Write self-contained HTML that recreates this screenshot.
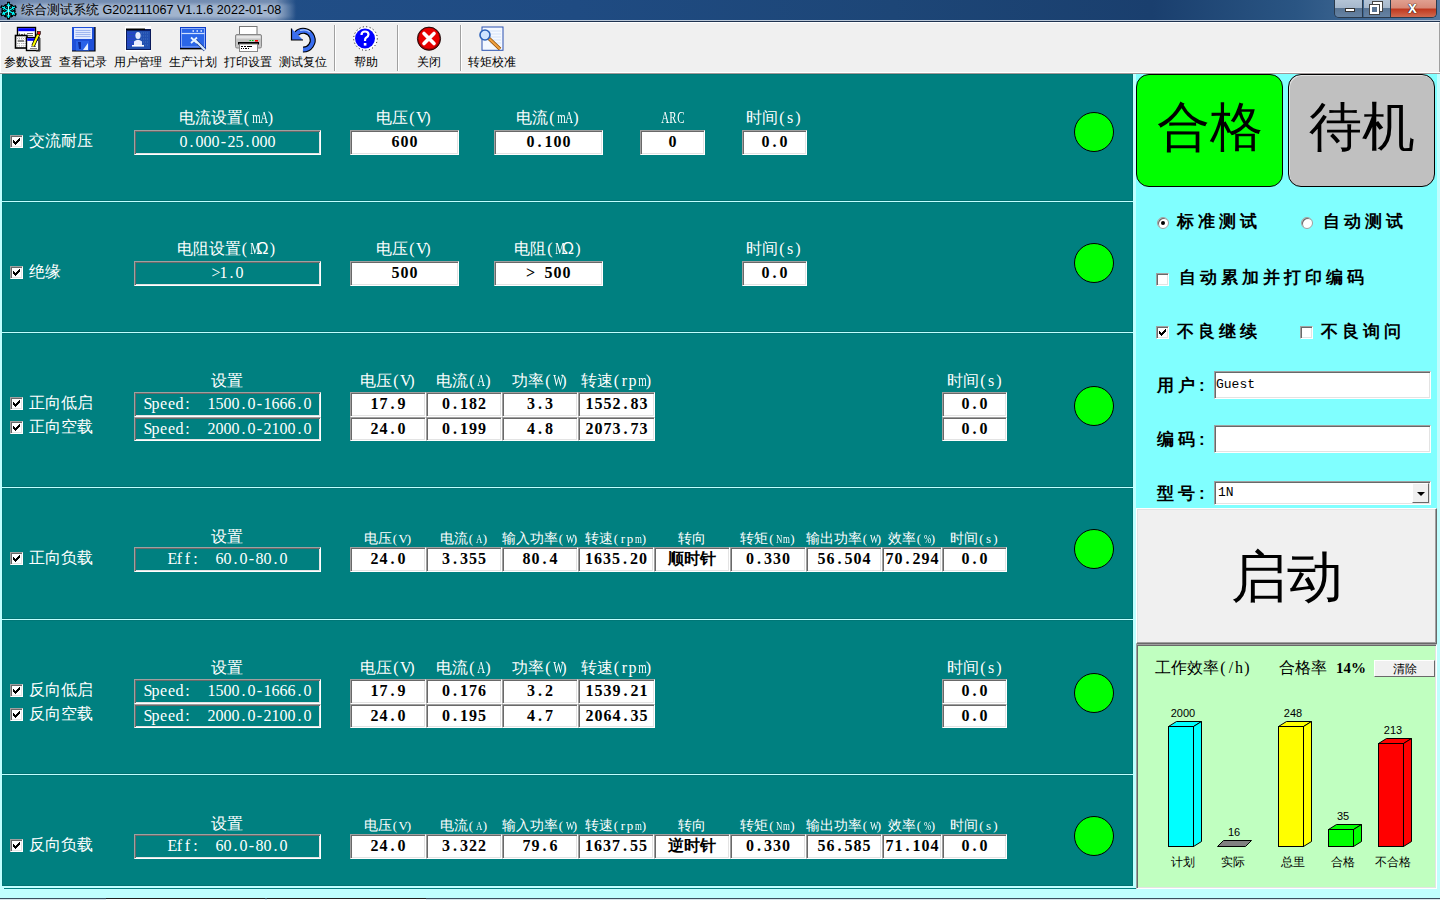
<!DOCTYPE html><html><head><meta charset="utf-8"><title>综合测试系统</title><style>
*{margin:0;padding:0;box-sizing:border-box}
html,body{width:1440px;height:900px;overflow:hidden;background:#c0ffff;font-family:"Liberation Sans",sans-serif}
.a{position:absolute}
.lbl{position:absolute;color:#fff;font-size:16px;line-height:16px;white-space:nowrap;text-align:center}
.lbl14{position:absolute;color:#fff;font-size:14px;line-height:14px;white-space:nowrap;text-align:center}
.sk{position:absolute;border:1px solid;border-color:#a0a0a0 #fff #fff #a0a0a0;box-shadow:inset 1px 1px #696969,inset -1px -1px #e3e3e3}
.set{color:#fff;font-family:"Liberation Serif",serif;font-size:16px;line-height:16px;text-align:center;white-space:pre;display:flex;align-items:flex-start;justify-content:center;padding-top:3px}
.set i{width:8px}
.val{background:#fff;color:#000;font-family:"Liberation Serif",serif;font-weight:bold;font-size:16px;line-height:16px;white-space:pre;display:flex;align-items:flex-start;justify-content:center;padding-top:3px}
.val i{width:9px}
i{display:inline-block;font-style:normal;text-align:center}
.panel{position:absolute;left:2px;width:1131px;background:#008080;box-shadow:inset 1px 1px #007777,inset -1px -1px #007272}
.chk{position:absolute;width:13px;height:13px;background:#fff;border:1px solid;border-color:#a0a0a0 #fff #fff #a0a0a0;box-shadow:inset 1px 1px #696969,inset -1px -1px #e3e3e3}
.dot{position:absolute;width:40px;height:40px;border-radius:50%;background:#00ff00;border:1px solid #000}
.tb{position:absolute;top:55px;font-size:12px;line-height:14px;color:#000;text-align:center;white-space:nowrap}
.m{font-family:"Liberation Serif",serif;font-size:16px}
.m i{width:8px}
i.w{transform:scaleX(.68)}
.m14{font-family:"Liberation Serif",serif;font-size:13px}
.m14 i{width:7px}
.rp{position:absolute;font-weight:bold;font-size:17px;line-height:18px;letter-spacing:4px;color:#000;white-space:nowrap}
</style></head><body>
<div class="a" style="left:0;top:0;width:1440px;height:20px;background:linear-gradient(90deg,#22508a 0,#1f4b82 40%,#1d4677 62%,#1a3f6e 80%,#2a5583 90%,#557aa3 100%)"></div>
<div class="a" style="left:0;top:0;width:296px;height:20px;background:linear-gradient(90deg,rgba(100,125,165,.8) 0,rgba(125,148,182,.9) 8%,rgba(125,148,182,.9) 93%,rgba(125,148,182,0) 100%)"></div>
<div class="a" style="left:0;top:4px;width:296px;height:14px;background:linear-gradient(90deg,rgba(180,196,218,0) 0,rgba(180,196,218,.7) 12%,rgba(180,196,218,.7) 92%,rgba(180,196,218,0) 100%);filter:blur(1.5px)"></div>
<div class="a" style="left:0;top:20px;width:1440px;height:1px;background:#b9c7d8"></div>
<div class="a" style="left:0;top:21px;width:1440px;height:1px;background:#1f3350"></div>
<div class="a" style="left:21px;top:2px;font-size:12.6px;line-height:16px;color:#000;white-space:nowrap">综合测试系统 G202111067 V1.1.6 2022-01-08</div>
<svg class="a" style="left:0px;top:0px" width="18" height="20" viewBox="0 0 18 20"><path d="M8.5 10.7L8.50 3.30M6.70 5.50L10.30 5.50M8.5 10.7L2.09 7.00M3.10 9.66L4.90 6.54M8.5 10.7L2.09 14.40M4.90 14.86L3.10 11.74M8.5 10.7L8.50 18.10M10.30 15.90L6.70 15.90M8.5 10.7L14.91 14.40M13.90 11.74L12.10 14.86M8.5 10.7L14.91 7.00M12.10 6.54L13.90 9.66" stroke="#000" stroke-width="3" stroke-linecap="square" fill="none"/><path d="M8.5 10.7L8.50 3.30M6.70 5.50L10.30 5.50M8.5 10.7L2.09 7.00M3.10 9.66L4.90 6.54M8.5 10.7L2.09 14.40M4.90 14.86L3.10 11.74M8.5 10.7L8.50 18.10M10.30 15.90L6.70 15.90M8.5 10.7L14.91 14.40M13.90 11.74L12.10 14.86M8.5 10.7L14.91 7.00M12.10 6.54L13.90 9.66" stroke="#00ffff" stroke-width="1.3" fill="none"/><path d="M8.5 6v9.4" stroke="#e8ffff" stroke-width="0.7"/></svg>
<div class="a" style="left:1334px;top:0;width:103px;height:18px;border:1px solid #2a3a4c;border-top:none;border-radius:0 0 5px 5px;overflow:hidden"><div class="a" style="left:0;top:0;width:28px;height:17px;background:linear-gradient(#b4c4d6 0,#a6b8cc 45%,#5a7594 50%,#6683a3 100%);border-right:1px solid #2a3a4c"></div><div class="a" style="left:29px;top:0;width:26px;height:17px;background:linear-gradient(#b4c4d6 0,#a6b8cc 45%,#5a7594 50%,#6683a3 100%)"></div><div class="a" style="left:55px;top:0;width:48px;height:17px;background:linear-gradient(#e0a090 0,#d88a78 45%,#c03a20 55%,#d06a50 100%);border-left:1px solid #2a3a4c"></div><div class="a" style="left:10px;top:8px;width:10px;height:4px;background:#fff;border:1px solid #333"></div><div class="a" style="left:38px;top:2px;width:9px;height:9px;border:2px solid #fff;outline:1px solid #444"></div><div class="a" style="left:35px;top:5px;width:9px;height:9px;border:2px solid #fff;background:#5a7594;outline:1px solid #444"></div><div class="a" style="left:73px;top:-1px;font:bold 16px/18px 'Liberation Sans',sans-serif;color:#fff;text-shadow:0 0 1px #000,0 0 1px #000">x</div></div>
<div class="a" style="left:0;top:22px;width:1440px;height:52px;background:#f0f0f0;border-top:1px solid #fff;border-left:1px solid #fff;border-right:1px solid #a0a0a0"></div>
<div class="a" style="left:0;top:72px;width:1440px;height:1px;background:#fff"></div>
<div class="a" style="left:0;top:73px;width:1440px;height:1px;background:#a09898"></div>
<div class="tb" style="left:-2px;width:60px">参数设置</div>
<div class="tb" style="left:53px;width:60px">查看记录</div>
<div class="tb" style="left:108px;width:60px">用户管理</div>
<div class="tb" style="left:163px;width:60px">生产计划</div>
<div class="tb" style="left:218px;width:60px">打印设置</div>
<div class="tb" style="left:273px;width:60px">测试复位</div>
<div class="tb" style="left:336px;width:60px">帮助</div>
<div class="tb" style="left:399px;width:60px">关闭</div>
<div class="tb" style="left:462px;width:60px">转矩校准</div>
<div class="a" style="left:334px;top:25px;width:1px;height:46px;background:#a0a0a0;box-shadow:1px 0 #fff"></div>
<div class="a" style="left:397px;top:25px;width:1px;height:46px;background:#a0a0a0;box-shadow:1px 0 #fff"></div>
<div class="a" style="left:460px;top:25px;width:1px;height:46px;background:#a0a0a0;box-shadow:1px 0 #fff"></div>

<svg class="a" style="left:0;top:0" width="520" height="56" viewBox="0 0 520 56">
 <!-- icon1: params -->
 <g>
  <rect x="17.5" y="27.5" width="18" height="16" fill="#fff" stroke="#000" stroke-width="1.4"/>
  <rect x="18.2" y="28.2" width="16.6" height="3" fill="#0000ff"/>
  <path d="M19.5 33.5v2M21 34.5h2M24.5 33.5v2M27 33.5h6M28 35.5h5" stroke="#666" stroke-width="1"/>
  <rect x="15.5" y="35.5" width="11.5" height="12.5" fill="#fff" stroke="#000" stroke-width="1.6"/>
  <path d="M17 38.5h9M17 41h9M17 43.5h9M17 46h9" stroke="#b0b0b0" stroke-width="1" stroke-dasharray="1 1"/>
  <path d="M19 37v10M22 37v10M25 37v10" stroke="#c0c0c0" stroke-width="1" stroke-dasharray="1 1"/>
  <rect x="18" y="40" width="6" height="2" fill="#888"/>
  <rect x="26.5" y="37.5" width="12.5" height="13" fill="#fff" stroke="#000" stroke-width="1.4"/>
  <rect x="27.2" y="38.2" width="11" height="2.6" fill="#0000ff"/>
  <path d="M30 48.5h7M31 46.5h5" stroke="#777" stroke-width="0.9"/>
  <path d="M33 46 L38.5 34" stroke="#000" stroke-width="3.6"/>
  <path d="M33 46 L38.5 34" stroke="#ffff00" stroke-width="2"/>
  <rect x="37.3" y="31.5" width="3" height="3" fill="#ff0000" stroke="#000" stroke-width="0.6"/>
  <path d="M36 51h4M40 38v13" stroke="#444" stroke-width="1"/>
 </g>
 <!-- icon2: floppy -->
 <g>
  <rect x="72" y="27" width="23" height="24" fill="#1e4fd8"/>
  <path d="M72 51h23V27" fill="none" stroke="#000" stroke-width="1.2"/>
  <rect x="74" y="28" width="18" height="11" fill="#dfe8ff"/>
  <path d="M75.5 30.5h15M75.5 32.5h15M75.5 34.5h15M75.5 36.5h15" stroke="#9fb6f0" stroke-width="1"/>
  <rect x="76" y="41" width="13" height="9.5" fill="#2a62e8"/>
  <path d="M78 42h3v7h-2z" fill="#0a2a9a"/>
  <path d="M83 50 L88 43 V50Z" fill="#e8f0ff"/>
 </g>
 <!-- icon3: users -->
 <g>
  <rect x="125" y="26" width="26" height="25.5" fill="#fff"/>
  <rect x="126" y="29" width="25" height="21" fill="#0a1a5a"/>
  <rect x="126" y="28.5" width="19" height="1.5" fill="#000"/>
  <rect x="127" y="31" width="23" height="18" fill="#2250b0"/>
  <path d="M127.5 33h8M127.5 36h8M127.5 39h8M127.5 42h8M127.5 45h8" stroke="#3030ff" stroke-width="1.2" stroke-dasharray="1.2 0.8"/>
  <path d="M141 33h8M141 36h8M141 39h8M141 42h8M141 45h8" stroke="#4070c0" stroke-width="1.2" stroke-dasharray="1 1"/>
  <ellipse cx="138" cy="35.5" rx="2.6" ry="3.6" fill="#e8ecff"/>
  <path d="M134 41.5 Q138 38 142 41.5 V45 H134Z" fill="#e8ecff"/>
  <rect x="132" y="45" width="12" height="1.6" fill="#fff"/>
 </g>
 <!-- icon4: plan -->
 <g>
  <rect x="180" y="27" width="26" height="21.5" fill="#0c3cc8"/>
  <rect x="181.5" y="28.5" width="23" height="18.5" fill="#2a66e8" stroke="#a8c4ff" stroke-width="0.8"/>
  <path d="M181.5 33.5h23" stroke="#d0e0ff" stroke-width="1.2"/>
  <path d="M192.5 31h1.5M196.5 31h1.5M200.5 31h1.5" stroke="#e8f0ff" stroke-width="1.6"/>
  <rect x="180" y="48" width="22" height="1.4" fill="#000"/>
  <path d="M195 40 L205 50" stroke="#1a3a8a" stroke-width="3.6"/>
  <path d="M195 40 L205 50" stroke="#d8ecff" stroke-width="2.2"/>
  <path d="M191 37.5 L197 43 M197 37.5 L191 43" stroke="#e8f4ff" stroke-width="1.8"/>
 </g>
 <!-- icon5: printer -->
 <g>
  <rect x="239.5" y="26.5" width="17.5" height="10" fill="#fff" stroke="#777" stroke-width="1"/>
  <path d="M238 36.5h21" stroke="#000" stroke-width="1.2"/>
  <rect x="235.5" y="34.5" width="26" height="13.5" rx="1.5" fill="#c4c4c4" stroke="#888" stroke-width="1"/>
  <rect x="236.5" y="36" width="24" height="2.5" fill="#e6e6e6"/>
  <path d="M249.5 40.5h1.5M252 40.5h1.5" stroke="#00d000" stroke-width="1.2"/>
  <path d="M255 40.8h3" stroke="#ff0000" stroke-width="1.6"/>
  <rect x="238" y="42" width="21" height="2.5" fill="#000"/>
  <rect x="239.5" y="44" width="18" height="7.5" fill="#fff" stroke="#888" stroke-width="1"/>
  <path d="M241 46.5h2M244 46.5h2M247 46.5h5M241 48.5h1M243 48.5h1M245 48.5h2M248 48.5h1" stroke="#000" stroke-width="1"/>
 </g>
 <!-- icon6: undo -->
 <g>
  <path d="M296.6 33.6 A9.4 9.4 0 1 1 303 49.6" fill="none" stroke="#000" stroke-width="6"/>
  <path d="M296.6 33.6 A9.4 9.4 0 1 1 303 49.6" fill="none" stroke="#3a6ef0" stroke-width="3.8"/>
  <path d="M300 30.5 Q306 28.5 310 32" fill="none" stroke="#a8c4ff" stroke-width="1.2"/>
  <path d="M291.5 28.5 V40 H303 Z" fill="#3a6ef0"/><path d="M303 40 H291.5 V28.5" fill="none" stroke="#000" stroke-width="1.2"/>
 </g>
 <!-- icon7: help -->
 <g>
  <circle cx="365.5" cy="38.5" r="11.5" fill="#fff"/>
  <circle cx="365.5" cy="38.5" r="11.8" fill="none" stroke="#000" stroke-width="1" stroke-dasharray="1 2.5"/>
  <circle cx="365" cy="38.5" r="10" fill="#0000ff"/>
  <path d="M361.5 35 Q361.5 31.5 365 31.5 Q368.5 31.5 368.5 34.5 Q368.5 36.5 365.8 38 Q365 38.6 365 41" fill="none" stroke="#fff" stroke-width="2.2"/>
  <rect x="363.8" y="43" width="2.6" height="2.6" fill="#fff"/>
 </g>
 <!-- icon8: close -->
 <g>
  <circle cx="429" cy="38.7" r="11.6" fill="#a00000" stroke="#000" stroke-width="0.8"/>
  <circle cx="429" cy="38.2" r="10.2" fill="#e80000"/>
  <path d="M424 33.5 L434 43.5 M434 33.5 L424 43.5" stroke="#fff" stroke-width="3.6" stroke-linecap="round"/>
 </g>
 <!-- icon9: zoom -->
 <g>
  <rect x="482" y="27" width="21" height="23.3" fill="#f4f8ff" stroke="#2a50b0" stroke-width="1"/>
  <path d="M485 31h16M485 34h16M490 37h11M490 40h11M490 43h11" stroke="#d4e2f8" stroke-width="1.2"/>
  <path d="M489 38.5 L500 49" stroke="#8a4a00" stroke-width="3.6"/>
  <path d="M489 38.5 L500 49" stroke="#f0a040" stroke-width="2.2"/>
  <circle cx="485" cy="35" r="5" fill="#cfe4ff" stroke="#2a60b8" stroke-width="1.6"/>
 </g>
</svg>

<div class="panel" style="top:74px;height:127px"></div>
<div class="panel" style="top:202px;height:130px"></div>
<div class="panel" style="top:333px;height:154px"></div>
<div class="panel" style="top:488px;height:131px"></div>
<div class="panel" style="top:620px;height:154px"></div>
<div class="panel" style="top:775px;height:111px"></div>
<div class="a" style="left:4px;top:888px;width:1132px;height:1px;background:#008080"></div>
<div class="a" style="left:0;top:898px;width:1440px;height:1px;background:#3a5060"></div>
<div class="a" style="left:0;top:899px;width:1440px;height:1px;background:#d8e4ea"></div>
<div class="a" style="left:106px;top:898px;width:159px;height:2px;background:#fff;border-top:1px solid #202020"></div>
<div class="a" style="left:267px;top:898px;width:159px;height:2px;background:#fff;border-top:1px solid #202020"></div>
<div class="chk" style="left:10px;top:135px"><svg class="a" style="left:2px;top:2px" width="7" height="7" viewBox="0 0 7 7" shape-rendering="crispEdges"><path d="M6 0h1v3h-1zM5 1h1v3h-1zM4 2h1v3h-1zM3 3h1v3h-1zM2 4h1v3h-1zM1 3h1v3h-1zM0 2h1v3h-1z" fill="#000"/></svg></div>
<div class="lbl" style="left:29.0px;top:133px;width:64px">交流耐压</div>
<div class="lbl" style="left:126.5px;top:110px;width:200px">电流设置<span class="m"><i>(</i><i class="w">m</i><i class="w">A</i><i>)</i></span></div>
<div class="sk set" style="left:134px;top:130px;width:187px;height:25px"><i>0</i><i>.</i><i>0</i><i>0</i><i>0</i><i>-</i><i>2</i><i>5</i><i>.</i><i>0</i><i>0</i><i>0</i></div>
<div class="lbl" style="left:304.0px;top:110px;width:200px">电压<span class="m"><i>(</i><i>V</i><i>)</i></span></div>
<div class="sk val" style="left:350px;top:130px;width:109px;height:25px"><i>6</i><i>0</i><i>0</i></div>
<div class="lbl" style="left:448.0px;top:110px;width:200px">电流<span class="m"><i>(</i><i class="w">m</i><i class="w">A</i><i>)</i></span></div>
<div class="sk val" style="left:494px;top:130px;width:109px;height:25px"><i>0</i><i>.</i><i>1</i><i>0</i><i>0</i></div>
<div class="lbl" style="left:572.0px;top:110px;width:200px"><span class="m"><i class="w">A</i><i class="w">R</i><i class="w">C</i></span></div>
<div class="sk val" style="left:640px;top:130px;width:65px;height:25px"><i>0</i></div>
<div class="lbl" style="left:674.0px;top:110px;width:200px">时间<span class="m"><i>(</i><i>s</i><i>)</i></span></div>
<div class="sk val" style="left:742px;top:130px;width:65px;height:25px"><i>0</i><i>.</i><i>0</i></div>
<div class="dot" style="left:1074px;top:112px"></div>
<div class="chk" style="left:10px;top:266px"><svg class="a" style="left:2px;top:2px" width="7" height="7" viewBox="0 0 7 7" shape-rendering="crispEdges"><path d="M6 0h1v3h-1zM5 1h1v3h-1zM4 2h1v3h-1zM3 3h1v3h-1zM2 4h1v3h-1zM1 3h1v3h-1zM0 2h1v3h-1z" fill="#000"/></svg></div>
<div class="lbl" style="left:29.0px;top:264px;width:32px">绝缘</div>
<div class="lbl" style="left:126.5px;top:241px;width:200px">电阻设置<span class="m"><i>(</i><i class="w">M</i></span>Ω<span class="m"><i>)</i></span></div>
<div class="sk set" style="left:134px;top:261px;width:187px;height:25px"><i>&gt;</i><i>1</i><i>.</i><i>0</i></div>
<div class="lbl" style="left:304.0px;top:241px;width:200px">电压<span class="m"><i>(</i><i>V</i><i>)</i></span></div>
<div class="sk val" style="left:350px;top:261px;width:109px;height:25px"><i>5</i><i>0</i><i>0</i></div>
<div class="lbl" style="left:448.0px;top:241px;width:200px">电阻<span class="m"><i>(</i><i class="w">M</i></span>Ω<span class="m"><i>)</i></span></div>
<div class="sk val" style="left:494px;top:261px;width:109px;height:25px"><i>&gt;</i><i>&nbsp;</i><i>5</i><i>0</i><i>0</i></div>
<div class="lbl" style="left:674.0px;top:241px;width:200px">时间<span class="m"><i>(</i><i>s</i><i>)</i></span></div>
<div class="sk val" style="left:742px;top:261px;width:65px;height:25px"><i>0</i><i>.</i><i>0</i></div>
<div class="dot" style="left:1074px;top:243px"></div>
<div class="chk" style="left:10px;top:397px"><svg class="a" style="left:2px;top:2px" width="7" height="7" viewBox="0 0 7 7" shape-rendering="crispEdges"><path d="M6 0h1v3h-1zM5 1h1v3h-1zM4 2h1v3h-1zM3 3h1v3h-1zM2 4h1v3h-1zM1 3h1v3h-1zM0 2h1v3h-1z" fill="#000"/></svg></div>
<div class="lbl" style="left:29.0px;top:395px;width:64px">正向低启</div>
<div class="chk" style="left:10px;top:421px"><svg class="a" style="left:2px;top:2px" width="7" height="7" viewBox="0 0 7 7" shape-rendering="crispEdges"><path d="M6 0h1v3h-1zM5 1h1v3h-1zM4 2h1v3h-1zM3 3h1v3h-1zM2 4h1v3h-1zM1 3h1v3h-1zM0 2h1v3h-1z" fill="#000"/></svg></div>
<div class="lbl" style="left:29.0px;top:419px;width:64px">正向空载</div>
<div class="lbl" style="left:126.5px;top:373px;width:200px">设置</div>
<div class="sk set" style="left:134px;top:392px;width:187px;height:25px"><i>S</i><i>p</i><i>e</i><i>e</i><i>d</i><i>:</i><i>&nbsp;</i><i>&nbsp;</i><i>1</i><i>5</i><i>0</i><i>0</i><i>.</i><i>0</i><i>-</i><i>1</i><i>6</i><i>6</i><i>6</i><i>.</i><i>0</i></div>
<div class="sk set" style="left:134px;top:417px;width:187px;height:24px"><i>S</i><i>p</i><i>e</i><i>e</i><i>d</i><i>:</i><i>&nbsp;</i><i>&nbsp;</i><i>2</i><i>0</i><i>0</i><i>0</i><i>.</i><i>0</i><i>-</i><i>2</i><i>1</i><i>0</i><i>0</i><i>.</i><i>0</i></div>
<div class="lbl" style="left:343.0px;top:373px;width:90px">电压<span class="m"><i>(</i><i>V</i><i>)</i></span></div>
<div class="lbl" style="left:419.0px;top:373px;width:90px">电流<span class="m"><i>(</i><i class="w">A</i><i>)</i></span></div>
<div class="lbl" style="left:495.0px;top:373px;width:90px">功率<span class="m"><i>(</i><i class="w">W</i><i>)</i></span></div>
<div class="lbl" style="left:571.5px;top:373px;width:90px">转速<span class="m"><i>(</i><i>r</i><i>p</i><i class="w">m</i><i>)</i></span></div>
<div class="sk val" style="left:350px;top:392px;width:76px;height:25px"><i>1</i><i>7</i><i>.</i><i>9</i></div>
<div class="sk val" style="left:426px;top:392px;width:76px;height:25px"><i>0</i><i>.</i><i>1</i><i>8</i><i>2</i></div>
<div class="sk val" style="left:502px;top:392px;width:76px;height:25px"><i>3</i><i>.</i><i>3</i></div>
<div class="sk val" style="left:578px;top:392px;width:77px;height:25px"><i>1</i><i>5</i><i>5</i><i>2</i><i>.</i><i>8</i><i>3</i></div>
<div class="sk val" style="left:350px;top:417px;width:76px;height:24px"><i>2</i><i>4</i><i>.</i><i>0</i></div>
<div class="sk val" style="left:426px;top:417px;width:76px;height:24px"><i>0</i><i>.</i><i>1</i><i>9</i><i>9</i></div>
<div class="sk val" style="left:502px;top:417px;width:76px;height:24px"><i>4</i><i>.</i><i>8</i></div>
<div class="sk val" style="left:578px;top:417px;width:77px;height:24px"><i>2</i><i>0</i><i>7</i><i>3</i><i>.</i><i>7</i><i>3</i></div>
<div class="lbl" style="left:875.0px;top:373px;width:200px">时间<span class="m"><i>(</i><i>s</i><i>)</i></span></div>
<div class="sk val" style="left:942px;top:392px;width:65px;height:25px"><i>0</i><i>.</i><i>0</i></div>
<div class="sk val" style="left:942px;top:417px;width:65px;height:24px"><i>0</i><i>.</i><i>0</i></div>
<div class="dot" style="left:1074px;top:386px"></div>
<div class="chk" style="left:10px;top:552px"><svg class="a" style="left:2px;top:2px" width="7" height="7" viewBox="0 0 7 7" shape-rendering="crispEdges"><path d="M6 0h1v3h-1zM5 1h1v3h-1zM4 2h1v3h-1zM3 3h1v3h-1zM2 4h1v3h-1zM1 3h1v3h-1zM0 2h1v3h-1z" fill="#000"/></svg></div>
<div class="lbl" style="left:29.0px;top:550px;width:64px">正向负载</div>
<div class="lbl" style="left:126.5px;top:529px;width:200px">设置</div>
<div class="sk set" style="left:134px;top:547px;width:187px;height:25px"><i>E</i><i>f</i><i>f</i><i>:</i><i>&nbsp;</i><i>&nbsp;</i><i>6</i><i>0</i><i>.</i><i>0</i><i>-</i><i>8</i><i>0</i><i>.</i><i>0</i></div>
<div class="lbl14" style="left:343.0px;top:531px;width:90px">电压<span class="m14"><i>(</i><i>V</i><i>)</i></span></div>
<div class="lbl14" style="left:419.0px;top:531px;width:90px">电流<span class="m14"><i>(</i><i class="w">A</i><i>)</i></span></div>
<div class="lbl14" style="left:495.0px;top:531px;width:90px">输入功率<span class="m14"><i>(</i><i class="w">W</i><i>)</i></span></div>
<div class="lbl14" style="left:571.0px;top:531px;width:90px">转速<span class="m14"><i>(</i><i>r</i><i>p</i><i class="w">m</i><i>)</i></span></div>
<div class="lbl14" style="left:647.0px;top:531px;width:90px">转向</div>
<div class="lbl14" style="left:723.0px;top:531px;width:90px">转矩<span class="m14"><i>(</i><i class="w">N</i><i class="w">m</i><i>)</i></span></div>
<div class="lbl14" style="left:799.0px;top:531px;width:90px">输出功率<span class="m14"><i>(</i><i class="w">W</i><i>)</i></span></div>
<div class="lbl14" style="left:867.0px;top:531px;width:90px">效率<span class="m14"><i>(</i><i class="w">%</i><i>)</i></span></div>
<div class="lbl14" style="left:929.5px;top:531px;width:90px">时间<span class="m14"><i>(</i><i>s</i><i>)</i></span></div>
<div class="sk val" style="left:350px;top:547px;width:76px;height:25px"><i>2</i><i>4</i><i>.</i><i>0</i></div>
<div class="sk val" style="left:426px;top:547px;width:76px;height:25px"><i>3</i><i>.</i><i>3</i><i>5</i><i>5</i></div>
<div class="sk val" style="left:502px;top:547px;width:76px;height:25px"><i>8</i><i>0</i><i>.</i><i>4</i></div>
<div class="sk val" style="left:578px;top:547px;width:76px;height:25px"><i>1</i><i>6</i><i>3</i><i>5</i><i>.</i><i>2</i><i>0</i></div>
<div class="sk val" style="left:654px;top:547px;width:76px;height:25px">顺时针</div>
<div class="sk val" style="left:730px;top:547px;width:76px;height:25px"><i>0</i><i>.</i><i>3</i><i>3</i><i>0</i></div>
<div class="sk val" style="left:806px;top:547px;width:76px;height:25px"><i>5</i><i>6</i><i>.</i><i>5</i><i>0</i><i>4</i></div>
<div class="sk val" style="left:882px;top:547px;width:60px;height:25px"><i>7</i><i>0</i><i>.</i><i>2</i><i>9</i><i>4</i></div>
<div class="sk val" style="left:942px;top:547px;width:65px;height:25px"><i>0</i><i>.</i><i>0</i></div>
<div class="dot" style="left:1074px;top:529px"></div>
<div class="chk" style="left:10px;top:684px"><svg class="a" style="left:2px;top:2px" width="7" height="7" viewBox="0 0 7 7" shape-rendering="crispEdges"><path d="M6 0h1v3h-1zM5 1h1v3h-1zM4 2h1v3h-1zM3 3h1v3h-1zM2 4h1v3h-1zM1 3h1v3h-1zM0 2h1v3h-1z" fill="#000"/></svg></div>
<div class="lbl" style="left:29.0px;top:682px;width:64px">反向低启</div>
<div class="chk" style="left:10px;top:708px"><svg class="a" style="left:2px;top:2px" width="7" height="7" viewBox="0 0 7 7" shape-rendering="crispEdges"><path d="M6 0h1v3h-1zM5 1h1v3h-1zM4 2h1v3h-1zM3 3h1v3h-1zM2 4h1v3h-1zM1 3h1v3h-1zM0 2h1v3h-1z" fill="#000"/></svg></div>
<div class="lbl" style="left:29.0px;top:706px;width:64px">反向空载</div>
<div class="lbl" style="left:126.5px;top:660px;width:200px">设置</div>
<div class="sk set" style="left:134px;top:679px;width:187px;height:25px"><i>S</i><i>p</i><i>e</i><i>e</i><i>d</i><i>:</i><i>&nbsp;</i><i>&nbsp;</i><i>1</i><i>5</i><i>0</i><i>0</i><i>.</i><i>0</i><i>-</i><i>1</i><i>6</i><i>6</i><i>6</i><i>.</i><i>0</i></div>
<div class="sk set" style="left:134px;top:704px;width:187px;height:24px"><i>S</i><i>p</i><i>e</i><i>e</i><i>d</i><i>:</i><i>&nbsp;</i><i>&nbsp;</i><i>2</i><i>0</i><i>0</i><i>0</i><i>.</i><i>0</i><i>-</i><i>2</i><i>1</i><i>0</i><i>0</i><i>.</i><i>0</i></div>
<div class="lbl" style="left:343.0px;top:660px;width:90px">电压<span class="m"><i>(</i><i>V</i><i>)</i></span></div>
<div class="lbl" style="left:419.0px;top:660px;width:90px">电流<span class="m"><i>(</i><i class="w">A</i><i>)</i></span></div>
<div class="lbl" style="left:495.0px;top:660px;width:90px">功率<span class="m"><i>(</i><i class="w">W</i><i>)</i></span></div>
<div class="lbl" style="left:571.5px;top:660px;width:90px">转速<span class="m"><i>(</i><i>r</i><i>p</i><i class="w">m</i><i>)</i></span></div>
<div class="sk val" style="left:350px;top:679px;width:76px;height:25px"><i>1</i><i>7</i><i>.</i><i>9</i></div>
<div class="sk val" style="left:426px;top:679px;width:76px;height:25px"><i>0</i><i>.</i><i>1</i><i>7</i><i>6</i></div>
<div class="sk val" style="left:502px;top:679px;width:76px;height:25px"><i>3</i><i>.</i><i>2</i></div>
<div class="sk val" style="left:578px;top:679px;width:77px;height:25px"><i>1</i><i>5</i><i>3</i><i>9</i><i>.</i><i>2</i><i>1</i></div>
<div class="sk val" style="left:350px;top:704px;width:76px;height:24px"><i>2</i><i>4</i><i>.</i><i>0</i></div>
<div class="sk val" style="left:426px;top:704px;width:76px;height:24px"><i>0</i><i>.</i><i>1</i><i>9</i><i>5</i></div>
<div class="sk val" style="left:502px;top:704px;width:76px;height:24px"><i>4</i><i>.</i><i>7</i></div>
<div class="sk val" style="left:578px;top:704px;width:77px;height:24px"><i>2</i><i>0</i><i>6</i><i>4</i><i>.</i><i>3</i><i>5</i></div>
<div class="lbl" style="left:875.0px;top:660px;width:200px">时间<span class="m"><i>(</i><i>s</i><i>)</i></span></div>
<div class="sk val" style="left:942px;top:679px;width:65px;height:25px"><i>0</i><i>.</i><i>0</i></div>
<div class="sk val" style="left:942px;top:704px;width:65px;height:24px"><i>0</i><i>.</i><i>0</i></div>
<div class="dot" style="left:1074px;top:673px"></div>
<div class="chk" style="left:10px;top:839px"><svg class="a" style="left:2px;top:2px" width="7" height="7" viewBox="0 0 7 7" shape-rendering="crispEdges"><path d="M6 0h1v3h-1zM5 1h1v3h-1zM4 2h1v3h-1zM3 3h1v3h-1zM2 4h1v3h-1zM1 3h1v3h-1zM0 2h1v3h-1z" fill="#000"/></svg></div>
<div class="lbl" style="left:29.0px;top:837px;width:64px">反向负载</div>
<div class="lbl" style="left:126.5px;top:816px;width:200px">设置</div>
<div class="sk set" style="left:134px;top:834px;width:187px;height:25px"><i>E</i><i>f</i><i>f</i><i>:</i><i>&nbsp;</i><i>&nbsp;</i><i>6</i><i>0</i><i>.</i><i>0</i><i>-</i><i>8</i><i>0</i><i>.</i><i>0</i></div>
<div class="lbl14" style="left:343.0px;top:818px;width:90px">电压<span class="m14"><i>(</i><i>V</i><i>)</i></span></div>
<div class="lbl14" style="left:419.0px;top:818px;width:90px">电流<span class="m14"><i>(</i><i class="w">A</i><i>)</i></span></div>
<div class="lbl14" style="left:495.0px;top:818px;width:90px">输入功率<span class="m14"><i>(</i><i class="w">W</i><i>)</i></span></div>
<div class="lbl14" style="left:571.0px;top:818px;width:90px">转速<span class="m14"><i>(</i><i>r</i><i>p</i><i class="w">m</i><i>)</i></span></div>
<div class="lbl14" style="left:647.0px;top:818px;width:90px">转向</div>
<div class="lbl14" style="left:723.0px;top:818px;width:90px">转矩<span class="m14"><i>(</i><i class="w">N</i><i class="w">m</i><i>)</i></span></div>
<div class="lbl14" style="left:799.0px;top:818px;width:90px">输出功率<span class="m14"><i>(</i><i class="w">W</i><i>)</i></span></div>
<div class="lbl14" style="left:867.0px;top:818px;width:90px">效率<span class="m14"><i>(</i><i class="w">%</i><i>)</i></span></div>
<div class="lbl14" style="left:929.5px;top:818px;width:90px">时间<span class="m14"><i>(</i><i>s</i><i>)</i></span></div>
<div class="sk val" style="left:350px;top:834px;width:76px;height:25px"><i>2</i><i>4</i><i>.</i><i>0</i></div>
<div class="sk val" style="left:426px;top:834px;width:76px;height:25px"><i>3</i><i>.</i><i>3</i><i>2</i><i>2</i></div>
<div class="sk val" style="left:502px;top:834px;width:76px;height:25px"><i>7</i><i>9</i><i>.</i><i>6</i></div>
<div class="sk val" style="left:578px;top:834px;width:76px;height:25px"><i>1</i><i>6</i><i>3</i><i>7</i><i>.</i><i>5</i><i>5</i></div>
<div class="sk val" style="left:654px;top:834px;width:76px;height:25px">逆时针</div>
<div class="sk val" style="left:730px;top:834px;width:76px;height:25px"><i>0</i><i>.</i><i>3</i><i>3</i><i>0</i></div>
<div class="sk val" style="left:806px;top:834px;width:76px;height:25px"><i>5</i><i>6</i><i>.</i><i>5</i><i>8</i><i>5</i></div>
<div class="sk val" style="left:882px;top:834px;width:60px;height:25px"><i>7</i><i>1</i><i>.</i><i>1</i><i>0</i><i>4</i></div>
<div class="sk val" style="left:942px;top:834px;width:65px;height:25px"><i>0</i><i>.</i><i>0</i></div>
<div class="dot" style="left:1074px;top:816px"></div>
<div class="a" style="left:1136px;top:74px;width:301px;height:434px;background:#80ffff"></div>
<div class="a" style="left:1136px;top:74px;width:147px;height:113px;background:#00ff00;border:1px solid #000;border-radius:13px"></div>
<div class="a" style="left:1136px;top:100px;width:147px;font-size:53px;line-height:53px;text-align:center;color:#000">合格</div>
<div class="a" style="left:1288px;top:74px;width:147px;height:113px;background:#c0c0c0;border:1px solid #000;border-radius:13px;box-shadow:inset 1px 1px #e0e0e0"></div>
<div class="a" style="left:1288px;top:100px;width:147px;font-size:53px;line-height:53px;text-align:center;color:#000">待机</div>
<div class="a" style="left:1157px;top:217px;width:12px;height:12px;border-radius:50%;background:#fff;border:1px solid #a0a0a0;box-shadow:inset 1px 1px #696969"><div class="a" style="left:3px;top:3px;width:4px;height:4px;border-radius:50%;background:#000"></div></div>
<div class="rp" style="left:1177px;top:213px">标准测试</div>
<div class="a" style="left:1301px;top:217px;width:12px;height:12px;border-radius:50%;background:#fff;border:1px solid #a0a0a0;box-shadow:inset 1px 1px #696969"></div>
<div class="rp" style="left:1323px;top:213px">自动测试</div>
<div class="chk" style="left:1156px;top:273px"></div>
<div class="rp" style="left:1179px;top:269px">自动累加并打印编码</div>
<div class="chk" style="left:1156px;top:326px"><svg class="a" style="left:2px;top:2px" width="7" height="7" viewBox="0 0 7 7" shape-rendering="crispEdges"><path d="M6 0h1v3h-1zM5 1h1v3h-1zM4 2h1v3h-1zM3 3h1v3h-1zM2 4h1v3h-1zM1 3h1v3h-1zM0 2h1v3h-1z" fill="#000"/></svg></div>
<div class="rp" style="left:1177px;top:323px">不良继续</div>
<div class="chk" style="left:1300px;top:326px"></div>
<div class="rp" style="left:1321px;top:323px">不良询问</div>
<div class="rp" style="left:1157px;top:377px">用户:</div>
<div class="rp" style="left:1157px;top:431px">编码:</div>
<div class="rp" style="left:1157px;top:485px">型号:</div>
<div class="sk" style="left:1214px;top:371px;width:217px;height:28px;background:#fff"></div>
<div class="a" style="left:1216px;top:378px;width:100px;font-family:'Liberation Mono',monospace;font-size:13px;line-height:14px;color:#000">Guest</div>
<div class="sk" style="left:1214px;top:425px;width:217px;height:28px;background:#fff"></div>
<div class="sk" style="left:1214px;top:481px;width:217px;height:24px;background:#fff"></div>
<div class="a" style="left:1218px;top:486px;font-family:'Liberation Mono',monospace;font-size:13px;line-height:14px;color:#000">1N</div>
<div class="a" style="left:1412px;top:483px;width:17px;height:20px;background:#f0f0f0;border:1px solid;border-color:#fff #696969 #696969 #fff"><div class="a" style="left:4px;top:8px;width:0;height:0;border-left:4px solid transparent;border-right:4px solid transparent;border-top:4px solid #000"></div></div>
<div class="a" style="left:1136px;top:508px;width:301px;height:136px;background:#f0f0f0;border:1px solid;border-color:#fff #696969 #696969 #fff;box-shadow:inset -1px -1px #a0a0a0,inset 1px 1px #e3e3e3"></div>
<div class="a" style="left:1136px;top:549px;width:301px;font-size:56px;line-height:56px;text-align:center;color:#000">启动</div>
<div class="a" style="left:1136px;top:644px;width:301px;height:245px;background:#c0ffc0;border:1px solid;border-color:#a0a0a0 #fff #fff #a0a0a0;box-shadow:inset 1px 1px #696969,inset -1px -1px #e3e3e3"></div>
<div class="a" style="left:1155px;top:659px;font-size:16px;line-height:18px;color:#000;white-space:nowrap">工作效率<span class="m"><i>(</i><i>/</i><i>h</i><i>)</i></span></div>
<div class="a" style="left:1279px;top:659px;font-size:16px;line-height:18px;color:#000;white-space:nowrap">合格率</div>
<div class="a" style="left:1336px;top:659px;font-family:'Liberation Serif',serif;font-weight:bold;font-size:15px;line-height:18px;color:#000;white-space:nowrap">14%</div>
<div class="a" style="left:1374px;top:660px;width:61px;height:17px;background:#f0f0f0;border:1px solid;border-color:#fff #696969 #696969 #fff;font-size:12px;line-height:16px;text-align:center;color:#000">清除</div>
<svg class="a" style="left:1168px;top:721px" width="35" height="127" viewBox="0 0 35 127"><path d="M0.5 5.5 L8.5 0.5 L33.5 0.5 L25.5 5.5 Z" fill="#00ffff" stroke="#000"/><path d="M25.5 5.5 L33.5 0.5 L33.5 120.5 L25.5 125.5 Z" fill="#00ffff" stroke="#000"/><rect x="0.5" y="5.5" width="25" height="120" fill="#00ffff" stroke="#000"/></svg>
<div class="a" style="left:1153px;top:707px;width:60px;text-align:center;font-size:11px;line-height:12px;color:#000">2000</div>
<svg class="a" style="left:1278px;top:721px" width="35" height="127" viewBox="0 0 35 127"><path d="M0.5 5.5 L8.5 0.5 L33.5 0.5 L25.5 5.5 Z" fill="#ffff00" stroke="#000"/><path d="M25.5 5.5 L33.5 0.5 L33.5 120.5 L25.5 125.5 Z" fill="#ffff00" stroke="#000"/><rect x="0.5" y="5.5" width="25" height="120" fill="#ffff00" stroke="#000"/></svg>
<div class="a" style="left:1263px;top:707px;width:60px;text-align:center;font-size:11px;line-height:12px;color:#000">248</div>
<svg class="a" style="left:1328px;top:824px" width="35" height="24" viewBox="0 0 35 24"><path d="M0.5 5.5 L8.5 0.5 L33.5 0.5 L25.5 5.5 Z" fill="#00ff00" stroke="#000"/><path d="M25.5 5.5 L33.5 0.5 L33.5 17.5 L25.5 22.5 Z" fill="#00ff00" stroke="#000"/><rect x="0.5" y="5.5" width="25" height="17" fill="#00ff00" stroke="#000"/></svg>
<div class="a" style="left:1313px;top:810px;width:60px;text-align:center;font-size:11px;line-height:12px;color:#000">35</div>
<svg class="a" style="left:1378px;top:738px" width="35" height="110" viewBox="0 0 35 110"><path d="M0.5 5.5 L8.5 0.5 L33.5 0.5 L25.5 5.5 Z" fill="#ff0000" stroke="#000"/><path d="M25.5 5.5 L33.5 0.5 L33.5 103.5 L25.5 108.5 Z" fill="#ff0000" stroke="#000"/><rect x="0.5" y="5.5" width="25" height="103" fill="#ff0000" stroke="#000"/></svg>
<div class="a" style="left:1363px;top:724px;width:60px;text-align:center;font-size:11px;line-height:12px;color:#000">213</div>
<svg class="a" style="left:1217px;top:840px" width="36" height="8" viewBox="0 0 36 8"><path d="M0.5 6.5 L6.5 0.5 L34.5 0.5 L28.5 6.5 Z" fill="#808080" stroke="#000"/></svg>
<div class="a" style="left:1204px;top:826px;width:60px;text-align:center;font-size:11px;line-height:12px;color:#000">16</div>
<div class="a" style="left:1153px;top:855px;width:60px;text-align:center;font-size:12px;line-height:14px;color:#000">计划</div>
<div class="a" style="left:1203px;top:855px;width:60px;text-align:center;font-size:12px;line-height:14px;color:#000">实际</div>
<div class="a" style="left:1263px;top:855px;width:60px;text-align:center;font-size:12px;line-height:14px;color:#000">总里</div>
<div class="a" style="left:1313px;top:855px;width:60px;text-align:center;font-size:12px;line-height:14px;color:#000">合格</div>
<div class="a" style="left:1363px;top:855px;width:60px;text-align:center;font-size:12px;line-height:14px;color:#000">不合格</div>
</body></html>
